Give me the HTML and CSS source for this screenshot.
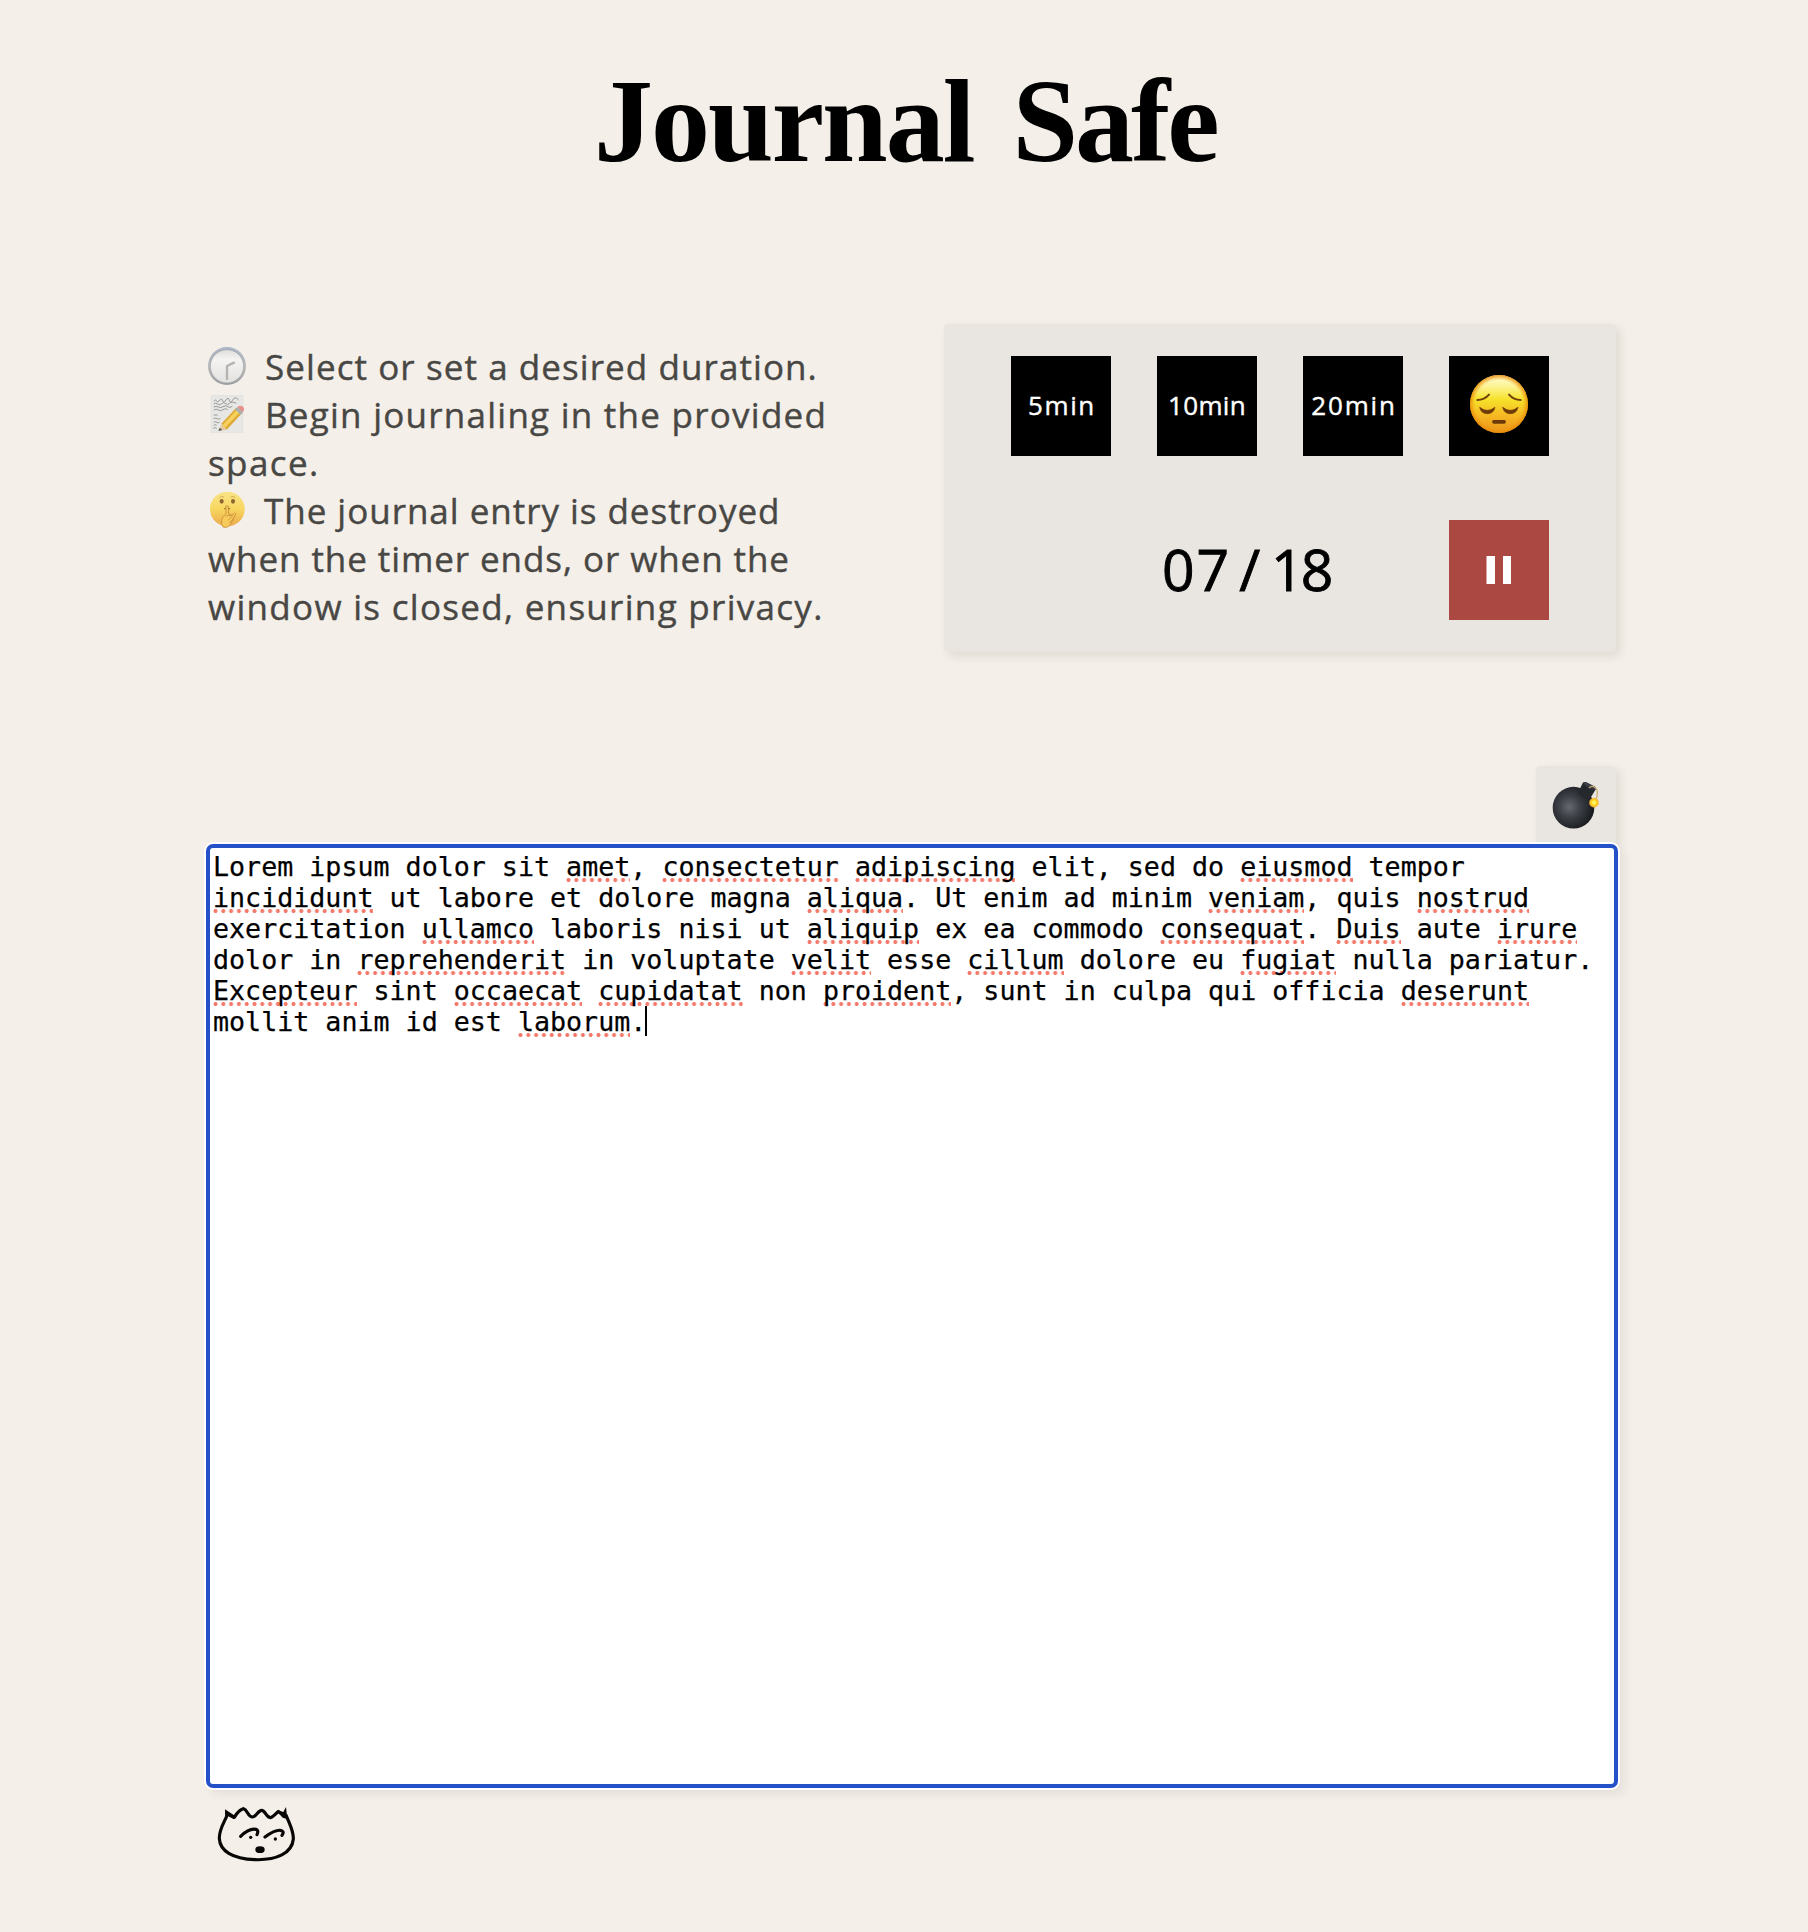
FILE: index.html
```html
<!DOCTYPE html>
<html lang="en">
<head>
<meta charset="utf-8">
<title>Journal Safe</title>
<link rel="stylesheet" href="styles.css">
</head>
<body>
<main class="page">
  <h1 class="title"><span class="title-a">Journal</span> <span class="title-b">Safe</span></h1>

  <section class="intro">
    <div class="steps">
      <p class="line"><svg class="emoji" viewBox="0 0 114 114">
        <defs><linearGradient id="rim" x1="0" y1="0" x2="0" y2="1"><stop offset="0" stop-color="#a9b5c8"/><stop offset=".5" stop-color="#b9b9b8"/><stop offset="1" stop-color="#9a9da0"/></linearGradient>
        <linearGradient id="dial" x1="0" y1="0" x2="0" y2="1"><stop offset="0" stop-color="#dededc"/><stop offset=".3" stop-color="#f5f4f2"/><stop offset="1" stop-color="#e2e1df"/></linearGradient></defs>
        <circle cx="57" cy="57" r="57" fill="url(#rim)"/><circle cx="57" cy="58" r="50" fill="url(#dial)" stroke="#9c9fa2" stroke-width="2"/>
        <path d="M57 96V57L78 47" fill="none" stroke="#b4b3b0" stroke-width="7" stroke-linecap="round" stroke-linejoin="round"/></svg><span class="s1">Select or set a desired duration.</span></p>
      <p class="line"><svg class="emoji" viewBox="0 0 114 114">
        <path d="M9 0H105V113H9z" fill="#e7e7e5" stroke="#d4d4d2"/>
        <path d="M18 18q5-6 8 0t9-2 9 1 10-2 10 1 10-1 18 0M17 27q6-5 12 0t12-1 12 0 12-1 20 0M17 36q8-4 14 0t14-1 14 0 14-1M17 45q8-5 14 0t14-1 14 0M17 60h12M17 71q6-4 10 0t10-1M17 82q6-4 10 0t8-1M17 91q6-4 9 0M16 100q6-4 10 0" fill="none" stroke="#8b8b89" stroke-width="2.6"/>
        <path d="M32 108L40 88 56 104z" fill="#e4c9a0"/><path d="M31 108l4-10 8 7z" fill="#555"/>
        <path d="M40 86L84 39 102 55 56 104z" fill="#dfa937"/><path d="M44 90L88 43 97 50 51 98z" fill="#f5d25c"/>
        <path d="M81 43L88 36 105 52 98 59z" fill="#a9b0b4"/><path d="M88 36q7-7 15-2 8 6 4 14l-4 4z" fill="#e5928d"/></svg><span class="s2">Begin journaling in the provided</span></p>
      <p class="line"><span class="s3">space.</span></p>
      <p class="line"><svg class="emoji" viewBox="0 0 114 114">
        <defs><linearGradient id="hush" x1="0" y1="0" x2="0" y2="1"><stop offset="0" stop-color="#f9e487"/><stop offset=".5" stop-color="#f7d75f"/><stop offset="1" stop-color="#eba94c"/></linearGradient></defs>
        <circle cx="58" cy="54" r="52" fill="url(#hush)"/><ellipse cx="41" cy="31" rx="6" ry="7" fill="#8d6531"/><ellipse cx="75" cy="31" rx="6" ry="7" fill="#8d6531"/>
        <path d="M34 20q7-6 14-2M68 18q8-4 14 2" fill="none" stroke="#d5ac55" stroke-width="3"/>
        <path d="M49 54q8-5 17 0" fill="none" stroke="#8d6531" stroke-width="4"/>
        <path d="M53 46q4-4 8 0l1 23q10 0 8 5l10-8q6 2 1 8L67 101q-8 11-22 7-6-8-4-21 3-12 13-19z" fill="#f7cb5b" stroke="#c98b38" stroke-width="2.5"/><path d="M52 76q8-5 17-2M60 88l16-15M64 97l14-17" fill="none" stroke="#c98b38" stroke-width="2.5"/></svg><span class="s4">The journal entry is destroyed</span></p>
      <p class="line"><span class="s5">when the timer ends, or when the</span></p>
      <p class="line"><span class="s6">window is closed, ensuring privacy.</span></p>
    </div>

    <div class="panel">
      <button class="key"><span class="k5">5min</span></button>
      <button class="key"><span class="k10">10min</span></button>
      <button class="key"><span class="k20">20min</span></button>
      <button class="key"><svg class="sad" viewBox="0 0 180 180">
        <defs><linearGradient id="face" x1="0" y1="0" x2="0" y2="1"><stop offset="0" stop-color="#fffbd0"/><stop offset=".18" stop-color="#fdf49a"/><stop offset=".42" stop-color="#f6e22b"/><stop offset=".7" stop-color="#f6b823"/><stop offset="1" stop-color="#ea921b"/></linearGradient>
        <radialGradient id="edge"><stop offset=".82" stop-color="#f39a10" stop-opacity="0"/><stop offset="1" stop-color="#e88c08" stop-opacity=".9"/></radialGradient></defs>
        <circle cx="90" cy="90" r="87" fill="url(#face)"/><circle cx="90" cy="90" r="87" fill="url(#edge)"/>
        <g fill="none" stroke="#733f0a" stroke-width="6" stroke-linecap="round"><path d="M25 78Q46 78 60 62M120 62Q134 78 155 78"/></g>
        <path d="M32 100Q55 118 78 100Q74 119 55 119Q36 119 32 100zM101 100Q124 118 147 100Q143 119 124 119Q105 119 101 100z" fill="#6b3a08" stroke="#6b3a08" stroke-width="2"/>
        <rect x="70" y="138" width="40" height="11" rx="4" fill="#6b3a08"/></svg></button>
      <div class="clock"><span class="mm">07</span><span class="sep">/</span><span class="ss">18</span></div>
      <button class="key pause"><svg class="bars" viewBox="0 0 26 28"><path d="M.5 0H9V28H.5zM17 0H25V28H17z" fill="#fff"/></svg></button>
    </div>
  </section>

  <section class="journal">
    <div class="bomb"><svg class="bomb-icon" viewBox="0 0 140 142">
      <defs><radialGradient id="ball" cx=".4" cy=".48" r=".6"><stop offset="0" stop-color="#666a70"/><stop offset=".45" stop-color="#3b3f45"/><stop offset="1" stop-color="#17191c"/></radialGradient>
      <radialGradient id="spark"><stop offset="0" stop-color="#fff9b0"/><stop offset=".45" stop-color="#ffe21c"/><stop offset=".75" stop-color="#fbb52a"/><stop offset="1" stop-color="#fbb52a" stop-opacity="0"/></radialGradient></defs>
      <circle cx="64" cy="79" r="62" fill="url(#ball)"/>
      <path d="M78 32L92 5Q96 1 102 3L128 17Q133 20 130 25L112 54Q88 53 78 32z" fill="#25282c"/><path d="M92 5Q96 1 102 3L128 17Q133 20 130 25Q108 24 92 5z" fill="#3c4046"/>
      <path d="M110 20Q120 11 130 20T131 55" fill="none" stroke="#cbb077" stroke-width="4"/>
      <circle cx="125" cy="64" r="16" fill="url(#spark)"/></svg></div>
    <div class="paper">
      <div class="row">Lorem ipsum dolor sit <u>amet</u>, <u>consectetur</u> <u>adipiscing</u> elit, sed do <u>eiusmod</u> tempor</div>
      <div class="row"><u>incididunt</u> ut labore et dolore magna <u>aliqua</u>. Ut enim ad minim <u>veniam</u>, quis <u>nostrud</u></div>
      <div class="row">exercitation <u>ullamco</u> laboris nisi ut <u>aliquip</u> ex ea commodo <u>consequat</u>. <u>Duis</u> aute <u>irure</u></div>
      <div class="row">dolor in <u>reprehenderit</u> in voluptate <u>velit</u> esse <u>cillum</u> dolore eu <u>fugiat</u> nulla pariatur.</div>
      <div class="row"><u>Excepteur</u> sint <u>occaecat</u> <u>cupidatat</u> non <u>proident</u>, sunt in culpa qui officia <u>deserunt</u></div>
      <div class="row">mollit anim id est <u>laborum</u>.<span class="caret"></span></div>
    </div>
  </section>

  <svg class="mascot" viewBox="48 108 240 168">
    <g fill="none" stroke="#080706" stroke-width="9.500" stroke-linecap="round" stroke-linejoin="round">
      <path d="M81 137C70 162 57 180 58 206C60 242 96 267 165 269C230 271 276 250 280 207C281 181 265 155 259 137"/>
      <path d="M80 129L103 142Q118 118 131 116C143 119 143 141 158 141C170 139 174 121 185 121C196 121 199 143 212 143Q220 139 235 124L253 140"/>
      <path d="M122 199Q147 174 168 178Q177 181 171 194M195 201Q225 179 241 181Q255 183 246 196"/>
    </g>
    <path d="M75 118L104 137 102 148 84 138 76 143zM238 122L250 126 258 111 262 147 246 142z" fill="#080706"/>
    <ellipse cx="180" cy="239" rx="14" ry="10" fill="#080706"/><circle cx="152" cy="202" r="5" fill="#080706"/><circle cx="226" cy="207" r="5" fill="#080706"/>
  </svg>
</main>
</body>
</html>
```
FILE: styles.css
```css
* { box-sizing: border-box; }
body { margin: 0; background: #f4efe9; color: #000; font-family: "Open Sans", sans-serif; }
.page { width: 1408px; height: 1932px; margin-left: 208px; display: flex; flex-direction: column; overflow: visible; }

.title { margin: 55px 0 0; height: 269px; padding-left: 386px; display: flex; gap: 39px; font: bold 118px/134px "Liberation Serif", serif; white-space: nowrap; flex: none; }
.title-a { letter-spacing: -2px; }
.title-b { letter-spacing: -3px; }

.intro { height: 328px; display: flex; justify-content: space-between; align-items: center; flex: none; }
.steps { width: 660px; margin-top: -2px; color: #484744; font-size: 35px; font-weight: 500; -webkit-text-stroke: .4px #484744; }
.line { margin: 0; height: 48px; line-height: 48px; display: flex; align-items: center; white-space: nowrap; }
.emoji { width: 38px; height: 38px; margin: 0 19px 2px 0; flex: none; }
.s1 { letter-spacing: 1.080px; }
.s2 { letter-spacing: 1.250px; }
.s3 { letter-spacing: 1.400px; }
.s4 { letter-spacing: .970px; margin-left: -1px; }
.s5 { letter-spacing: .920px; }
.s6 { letter-spacing: 1.300px; }

.panel { width: 672px; height: 328px; padding: 32px 67px; display: grid; grid-template-columns: repeat(4, 100px); grid-template-rows: 100px 100px; gap: 64px 46px; background: #e9e6e1; border-radius: 4px; box-shadow: 4px 4px 10px rgba(60, 40, 20, .1); }
.key { width: 100px; height: 100px; padding: 0 0 2px; border: 0; background: #000; color: #fff; font: 500 26px/30px "Open Sans", sans-serif; display: flex; align-items: center; justify-content: center; -webkit-text-stroke: .4px #fff; }
.k5 { letter-spacing: 1.600px; margin-right: -2px; }
.k10 { letter-spacing: .300px; }
.k20 { letter-spacing: 1.800px; margin-right: -2px; }
.sad { width: 60px; height: 60px; margin-bottom: 2px; }
.clock { grid-column: 1 / 4; display: flex; align-items: center; padding: 0 0 2px 151px; font: 500 57px/60px "Open Sans", sans-serif; -webkit-text-stroke: .9px #000; }
.mm { letter-spacing: 2px; }
.sep { margin: 0 11px 0 8px; }
.ss { letter-spacing: -3px; }
.pause { background: #ab4842; padding: 0; }
.bars { width: 26px; height: 28px; }

.journal { margin-top: 114px; display: flex; flex-direction: column; align-items: flex-end; flex: none; }
.bomb { width: 80px; height: 78px; padding: 15px 0 0 16px; background: #e9e6e1; border-radius: 4px 4px 0 0; box-shadow: 4px 4px 10px rgba(60, 40, 20, .1); }
.bomb-icon { width: 47px; height: 48px; display: block; }
.paper { position: relative; width: 1412px; height: 944px; margin-right: -2px; padding: 3px 0 0 3px; background: #fff; border: 4px solid #2451c7; border-radius: 7px; box-shadow: 0 0 0 2px #fff, 5px 5px 10px 1px rgba(60, 40, 20, .08); font: 26.667px/31px "DejaVu Sans Mono", monospace; -webkit-text-stroke: .25px #000; }
.row { height: 31px; white-space: pre; display: block; }
.row u { text-decoration: none; background: radial-gradient(circle at 2.500px 2px, #f4796b 1.700px, transparent 2.300px) 0 100% / 7.800px 4px repeat-x; }
.caret { display: inline-block; width: 2px; height: 30px; margin-left: -1px; background: #000; vertical-align: top; }

.mascot { width: 80px; height: 56px; margin: 18px 0 0 8px; flex: none; }
```
